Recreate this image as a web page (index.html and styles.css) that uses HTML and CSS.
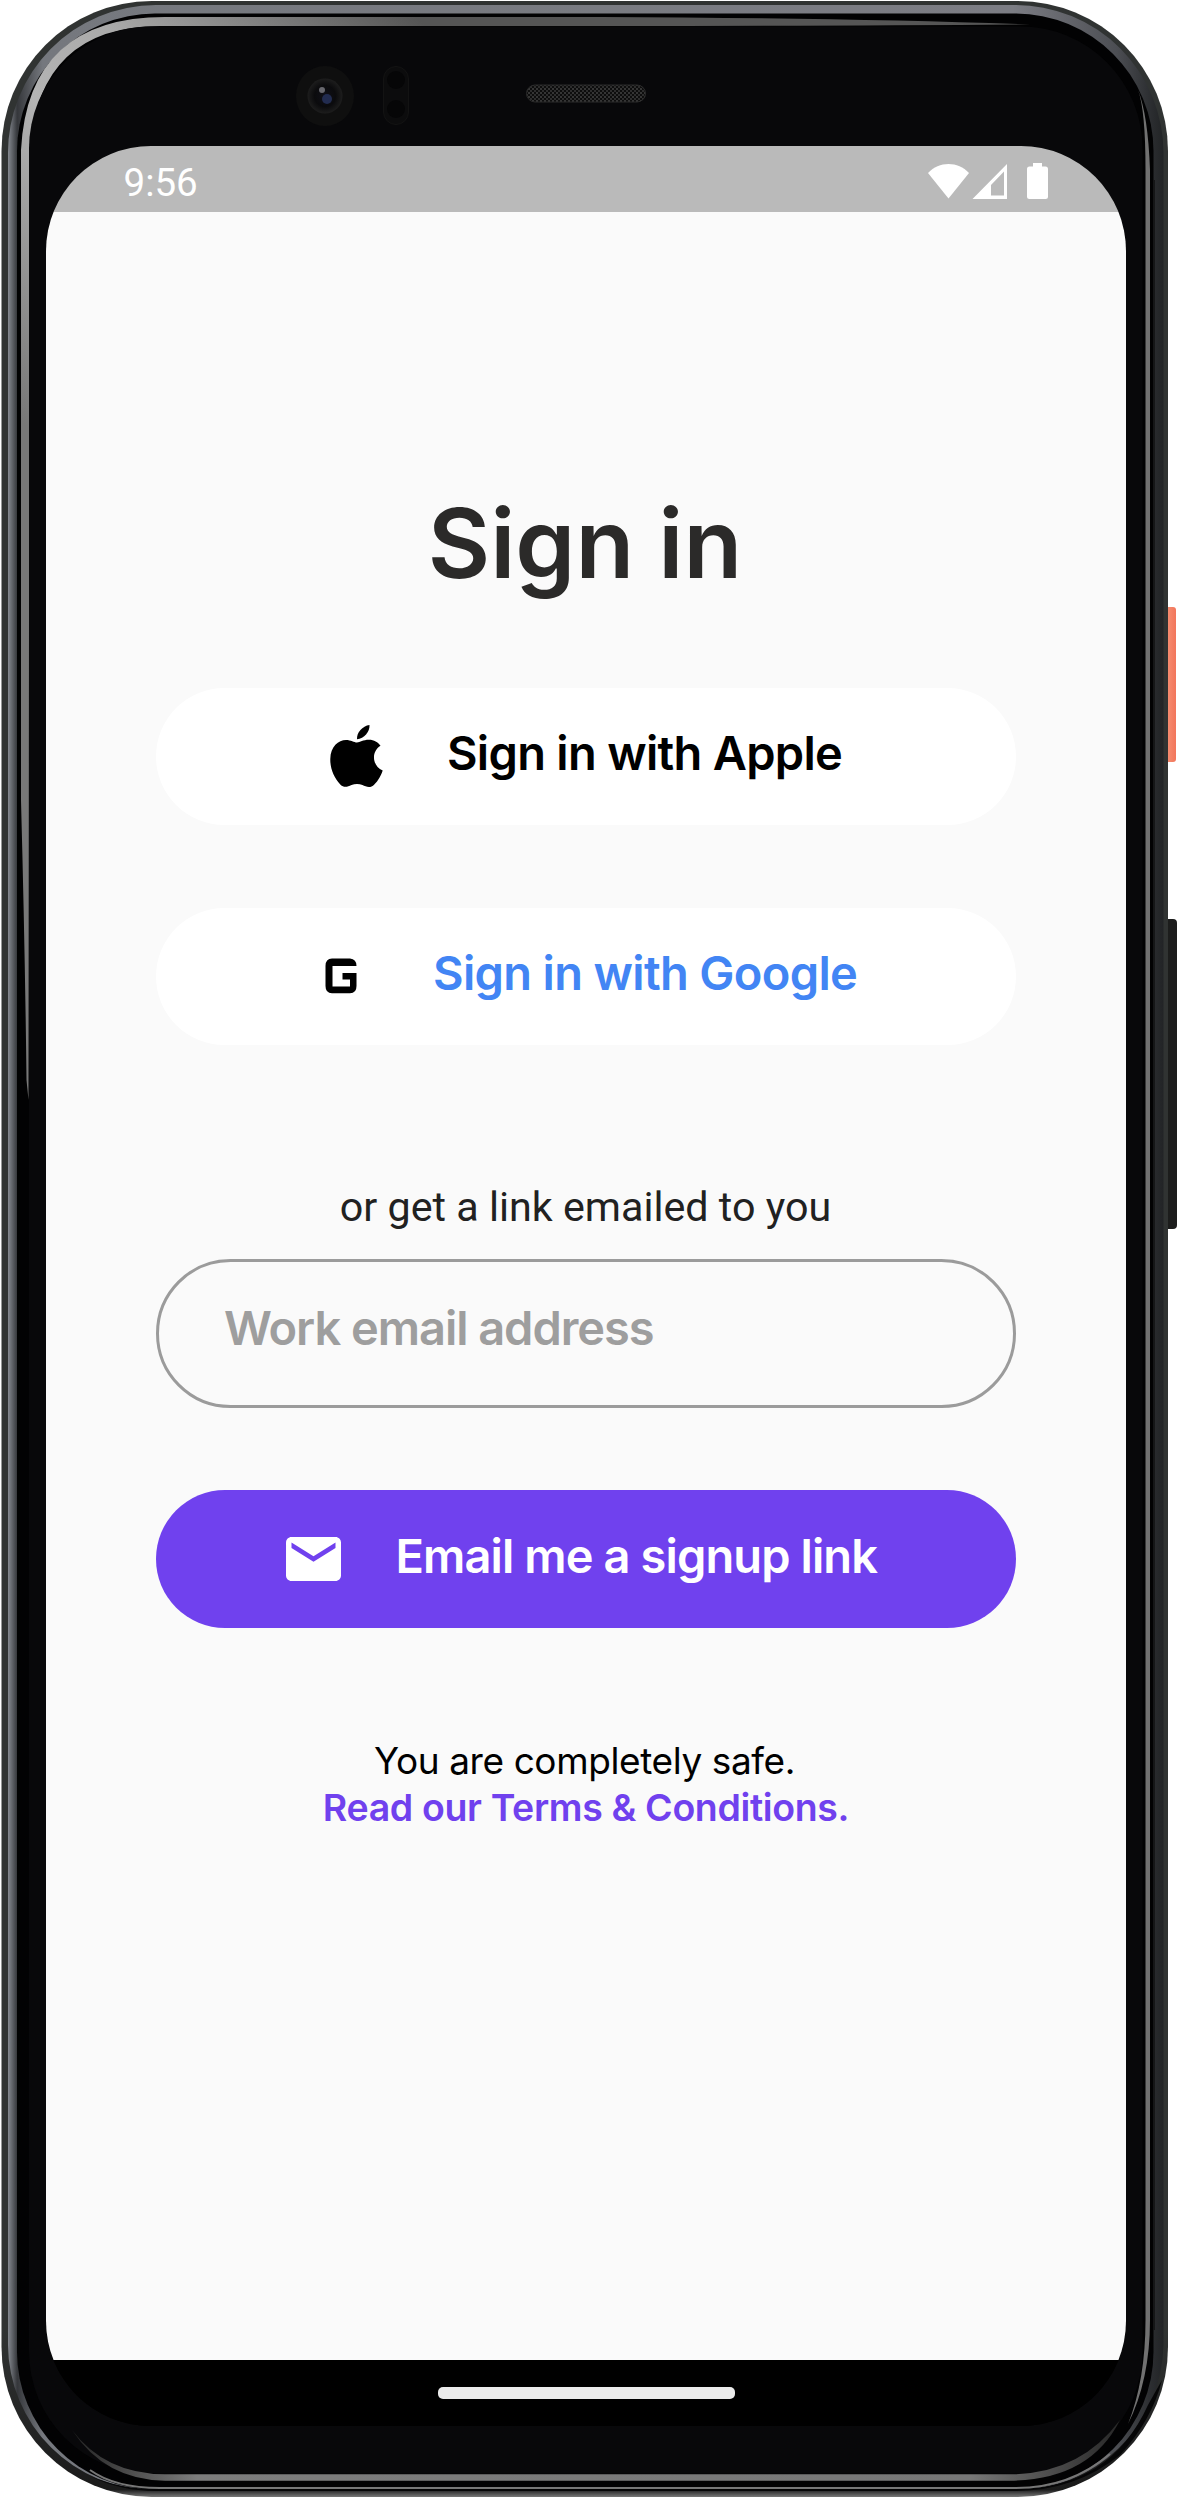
FILE: index.html
```html
<!DOCTYPE html>
<html lang="en">
<head>
<meta charset="utf-8">
<title>Sign in</title>
<link rel="stylesheet" href="styles.css">
</head>
<body>
<div class="device">
  <svg class="shell" width="1178" height="2498" viewBox="0 0 1178 2498" fill="none" aria-hidden="true">
    <defs>
      <linearGradient id="rim" gradientUnits="userSpaceOnUse" x1="8" y1="0" x2="1163" y2="0">
        <stop offset="0" stop-color="#858990"/><stop offset=".008" stop-color="#35373b"/><stop offset=".03" stop-color="#75787e"/><stop offset=".87" stop-color="#7c7d84"/><stop offset=".96" stop-color="#4c4e53"/><stop offset=".99" stop-color="#2b2d30"/><stop offset="1" stop-color="#222426"/>
      </linearGradient>
      <linearGradient id="edge" gradientUnits="userSpaceOnUse" x1="0" y1="2330" x2="0" y2="2497">
        <stop offset="0" stop-color="#303332"/><stop offset=".5" stop-color="#252626"/><stop offset=".955" stop-color="#1a1a1a"/><stop offset=".975" stop-color="#444"/><stop offset="1" stop-color="#777"/>
      </linearGradient>
      <linearGradient id="glare" gradientUnits="userSpaceOnUse" x1="20" y1="420" x2="420" y2="20">
        <stop offset="0" stop-color="#787878"/><stop offset=".42" stop-color="#b4b4b4"/><stop offset=".6" stop-color="#aaa"/><stop offset="1" stop-color="#555"/>
      </linearGradient>
      <linearGradient id="bottomGlare" gradientUnits="userSpaceOnUse" x1="70" y1="0" x2="1130" y2="0">
        <stop offset="0" stop-color="#222"/><stop offset=".12" stop-color="#7d7d7d"/><stop offset=".85" stop-color="#777"/><stop offset="1" stop-color="#222"/>
      </linearGradient>
      <linearGradient id="coral" x1="0" y1="0" x2="1" y2="0">
        <stop offset="0" stop-color="#e8674c"/><stop offset=".4" stop-color="#f58c70"/><stop offset="1" stop-color="#f2765b"/>
      </linearGradient>
      <radialGradient id="lens"><stop offset="0" stop-color="#101018"/><stop offset=".6" stop-color="#0b0b0d"/><stop offset="1" stop-color="#1d1d1d"/></radialGradient>
      <pattern id="mesh" width="4" height="4" patternUnits="userSpaceOnUse">
        <rect width="4" height="4" fill="#0d0d0d"/><rect width="2" height="2" fill="#353535"/><rect x="2" y="2" width="2" height="2" fill="#2d2d2d"/>
      </pattern>
    </defs>
    <rect x="1162" y="607" width="14" height="155" rx="3" fill="url(#coral)"/>
    <rect x="1162" y="919" width="15" height="310" rx="4" fill="#1c1d1c"/>
    <rect x="1.500" y="1" width="1166.500" height="2496" rx="150" fill="url(#edge)"/>
    <path d="M8 2200V155A148 148 0 0 1 156 5H1014A148 148 0 0 1 1163.500 155V2345A148 148 0 0 1 1014 2490H154A146 146 0 0 1 8 2345Z" fill="url(#rim)"/>
    <path d="M90 2476Q120 2489 156 2489H1014Q1110 2489 1148 2405L1162 2380Q1152 2420 1120 2455Q1075 2491 1014 2491H156Q120 2491 90 2476Z" fill="#060607"/>
    <rect x="17" y="13.500" width="1136.500" height="2476" rx="138" fill="#020203"/>
    <path d="M90 2470Q115 2488 160 2488H1016Q1070 2488 1110 2454" stroke="#777" stroke-width="2"/>
    <path d="M21 800V150Q28 17 165 17H600Q850 18 1030 24.500Q850 26 600 26H160Q39 26 29.500 150L28.500 1100L26.500 1080Q25 950 21 800Z" fill="url(#glare)"/>
    <rect x="29" y="26.500" width="1113.500" height="2447" rx="122" fill="#08080a"/>
    <path d="M72 2430Q105 2474 165 2474.300H1010Q1080 2474 1120 2420Q1090 2480 1010 2480.700H165Q105 2480 72 2430Z" fill="url(#bottomGlare)"/>
    <path d="M1138 90Q1145.500 110 1145.500 170V2320Q1145.500 2380 1128 2424Q1150 2380 1150 2320V170Q1148 115 1138 90Z" fill="#717171"/>
    <path d="M1154 180V2330" stroke="#151617" stroke-width="2"/>
    <ellipse cx="325" cy="96" rx="29" ry="30" fill="#0f0f0f"/>
    <circle cx="325" cy="96" r="17.500" fill="url(#lens)"/>
    <circle cx="322" cy="90" r="3" fill="#68686e"/><circle cx="327" cy="99" r="5" fill="#222c50"/>
    <rect x="383.500" y="66.500" width="25" height="58" rx="12.500" fill="#0c0c0d" stroke="#131313"/>
    <circle cx="396" cy="80" r="9" fill="#060607"/><circle cx="396" cy="109" r="9" fill="#060607"/>
    <rect x="526.500" y="85" width="119" height="17" rx="8.500" fill="url(#mesh)" stroke="#2b2b2b"/>
  </svg>

  <main class="screen">
    <header class="status">
      <span class="clock">9:56</span>
      <svg class="tray" width="122" height="38" viewBox="0 0 122 38" fill="#fff" aria-hidden="true">
        <path d="M1 11C12-1 31-1 42 11L21.500 36.500Z"/>
        <path fill-rule="evenodd" d="M45.500 37 80 2V37ZM64 33.500H77V9.500L64 23Z"/>
        <path d="M106 1h9v3.500h3.500q2.500 0 2.500 2.500V34.500q0 2.500-2.500 2.500h-16q-2.500 0-2.500-2.500V7q0-2.500 2.500-2.500H106Z"/>
      </svg>
    </header>

    <section class="content">
      <h1 class="title">Sign in</h1>
      <button class="button apple">
        <svg width="53" height="62" viewBox="0 0 53 62" aria-hidden="true">
          <path d="M39.500 0C40 6.500 34 14 27 14.200C26.500 7.500 32.500 1 39.500 0Z"/>
          <path d="M27 17.500C30 17.500 33 14.800 39 14.800C44 14.800 48 17.300 50.500 20.700C41 26.500 42 41 52.700 45.500C50.500 52 46.500 58 43 60.700C39.500 63.200 35.500 61.500 32.500 60C29 58.500 25 58.500 21.500 60C17.500 61.800 14 63 10.500 59.700C4 53 0 43 .3 34C.5 21.500 8.500 15 16 15C21 15 24 17.500 27 17.500Z"/>
        </svg>
        <span>Sign in with Apple</span>
      </button>
      <button class="button google">
        <svg width="32" height="36" viewBox="0 0 32 36" aria-hidden="true">
          <path d="M7 .500H25Q31.500 1 31.500 8H7.500V28.500H25V21.500H17.500V15H31.500V28Q31.500 35.300 25 35.300H7Q.500 35.300 .500 28V8Q.500 .500 7 .500Z"/>
        </svg>
        <span>Sign in with Google</span>
      </button>
      <p class="divider">or get a link emailed to you</p>
      <div class="field"><span>Work email address</span></div>
      <button class="button email">
        <svg width="55" height="44" viewBox="2 4 20 16" aria-hidden="true">
          <path fill="#fff" d="M20 4H4c-1.100 0-1.990.900-1.990 2L2 18c0 1.100.900 2 2 2h16c1.100 0 2-.900 2-2V6c0-1.100-.900-2-2-2zm0 4-8 5-8-5V6l8 5 8-5v2z"/>
        </svg>
        <span>Email me a signup link</span>
      </button>
      <p class="safe">You are completely safe.</p>
      <a class="terms">Read our Terms &amp; Conditions.</a>
    </section>

    <footer class="nav"><span class="handle"></span></footer>
  </main>
</div>
</body>
</html>
```
FILE: styles.css
```css
* { box-sizing: border-box; }
body { margin: 0; background: #fff; font-family: Inter, sans-serif; }

.device { display: grid; width: 1178px; height: 2498px; overflow: hidden; }
.shell, .screen { grid-area: 1 / 1; }

.screen {
  display: flex;
  flex-direction: column;
  width: 1080px;
  height: 2280px;
  margin: 146px 0 0 46px;
  border-radius: 105px;
  overflow: hidden;
  background: #000;
}

.status {
  display: flex;
  justify-content: space-between;
  height: 66px;
  padding: 16px 77px 0 77.5px;
  background: #bababa;
  color: #fff;
}
.clock { font: 400 38.5px/41px Roboto, sans-serif; }

.content {
  flex: 1;
  display: flex;
  flex-direction: column;
  align-items: center;
  padding: 273px 110px 0;
  background: #fafafa;
}
.title {
  margin: 0 2px 86.700px 0;
  font-size: 96px;
  font-weight: 600;
  line-height: 116px;
  color: #2b2a29;
}

.button {
  display: flex;
  align-items: center;
  width: 860px;
  height: 137.500px;
  padding: 0;
  border: 0;
  border-radius: 69px;
  background: #fff;
  color: #000;
  font: 600 47px/58px Inter, sans-serif;
  white-space: nowrap;
}
.button span { padding-bottom: 7px; }
.apple { padding-left: 174px; gap: 64px; letter-spacing: -.700px; }
.google { margin-top: 82.500px; padding-left: 169px; gap: 76px; letter-spacing: -.660px; color: #4285f4; }
.email { margin-top: 82px; padding-left: 130px; gap: 54.500px; letter-spacing: -.900px; background: #7041ee; color: #fff; }

.divider {
  margin: 137.400px 1px 28.700px 0;
  font: 400 41.250px/48px Roboto, sans-serif;
  color: #212121;
}
.field {
  display: flex;
  align-items: center;
  width: 860px;
  height: 149px;
  padding: 0 65px 12px;
  border: 3px solid #9b9b9b;
  border-radius: 75px;
  color: #9e9e9e;
  font-size: 47px;
  font-weight: 600;
  letter-spacing: -1.050px;
}
.safe {
  margin: 108.900px 3px 0 0;
  font-size: 37px;
  line-height: 47px;
  letter-spacing: -.400px;
  color: #000;
}
.terms {
  font-size: 37.500px;
  font-weight: 600;
  line-height: 47px;
  letter-spacing: -.360px;
  color: #7041ee;
}

.nav {
  display: flex;
  align-items: center;
  justify-content: center;
  height: 66px;
  background: #000;
}
.handle { width: 297px; height: 12px; border-radius: 5px; background: #ebebeb; }
```
